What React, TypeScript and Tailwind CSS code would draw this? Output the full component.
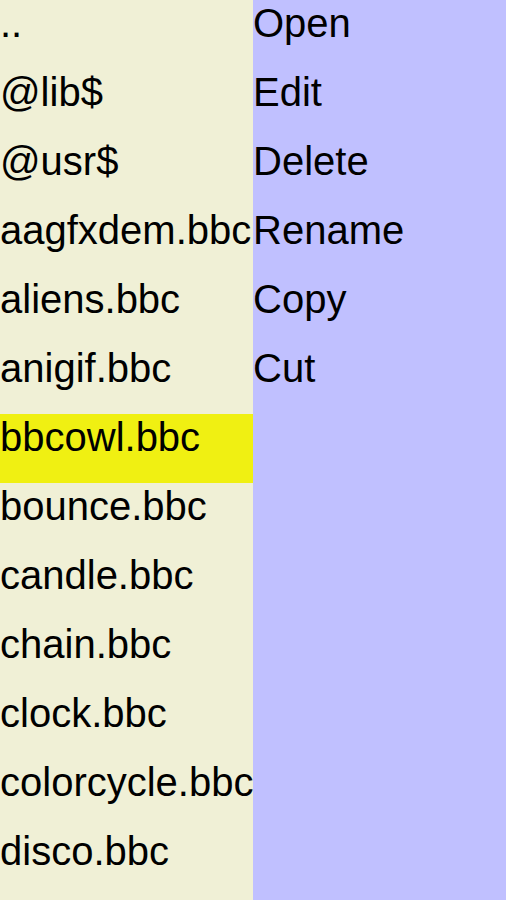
import React from "react";

const files = [
  "..",
  "@lib$",
  "@usr$",
  "aagfxdem.bbc",
  "aliens.bbc",
  "anigif.bbc",
  "bbcowl.bbc",
  "bounce.bbc",
  "candle.bbc",
  "chain.bbc",
  "clock.bbc",
  "colorcycle.bbc",
  "disco.bbc",
];

const actions = ["Open", "Edit", "Delete", "Rename", "Copy", "Cut"];

const App = () => {
  return (
    <div className="flex h-screen w-full overflow-hidden font-['Liberation_Sans',Arial,sans-serif] text-[40px] leading-[46px] text-black">
      <div className="w-[253px] shrink-0 bg-[#f0f0d6]">
        {files.map((f) => (
          <div
            key={f}
            className={`h-[69px] whitespace-nowrap ${f === "bbcowl.bbc" ? "bg-[#f0f012]" : ""}`}
          >
            {f}
          </div>
        ))}
      </div>
      <div className="relative flex-1 bg-[#c0c0ff]">
        {actions.map((a) => (
          <div key={a} className="h-[69px] whitespace-nowrap">
            {a}
          </div>
        ))}
      </div>
    </div>
  );
};

export default App;
